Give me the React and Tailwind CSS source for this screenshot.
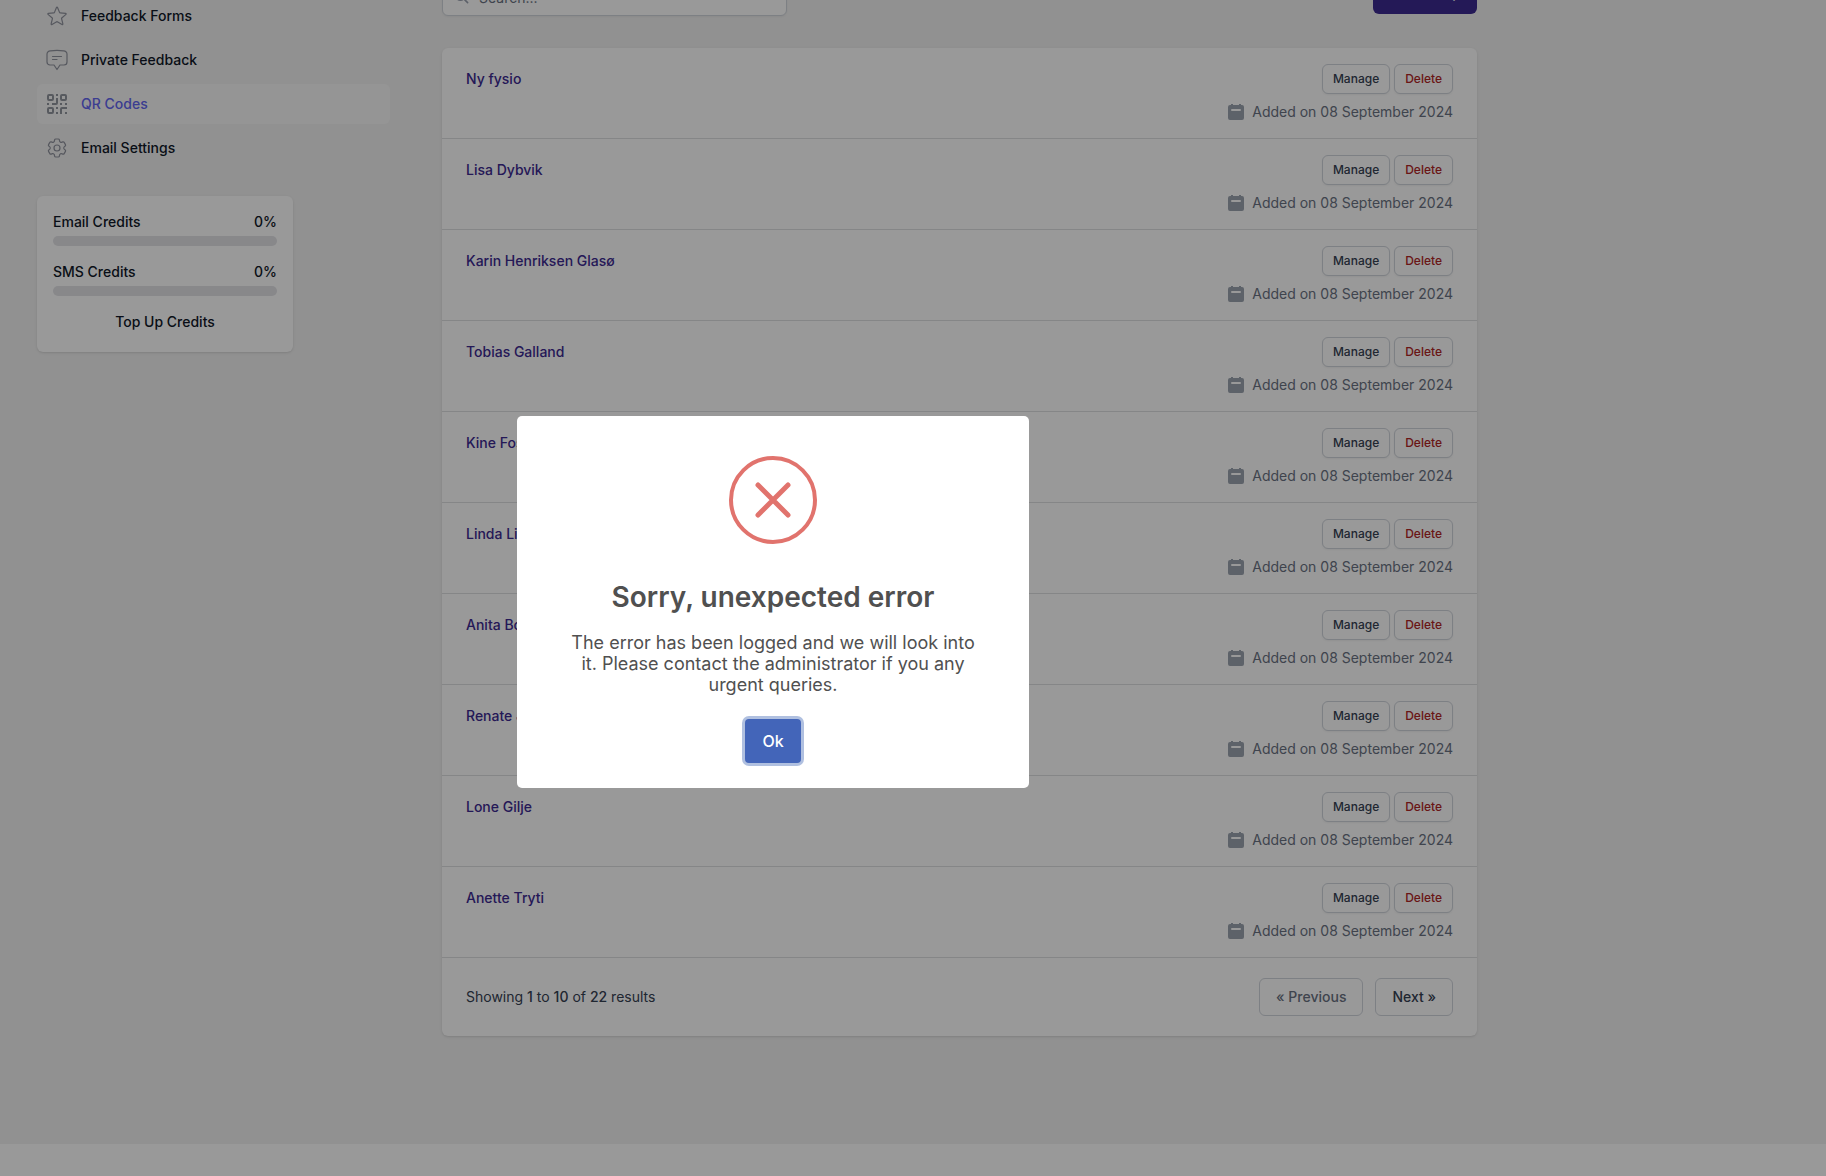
import React from 'react';

const navLinks = [
  { label: 'Feedback Forms', icon: 'star', href: '#feedback-forms' },
  { label: 'Private Feedback', icon: 'chat', href: '#private-feedback' },
  { label: 'QR Codes', icon: 'qr', href: '#qr-codes', active: true },
  { label: 'Email Settings', icon: 'cog', href: '#email-settings' },
];

const credits = [
  { label: 'Email Credits', value: 0 },
  { label: 'SMS Credits', value: 0 },
];

const people = [
  'Ny fysio',
  'Lisa Dybvik',
  'Karin Henriksen Glasø',
  'Tobias Galland',
  'Kine Fosse',
  'Linda Lie',
  'Anita Bolstad',
  'Renate Johansen',
  'Lone Gilje',
  'Anette Tryti',
];

const NavIcon = ({ name }) => {
  if (name === 'qr') {
    return (
      <svg className="size-6 shrink-0 text-[#92969f]" viewBox="0 0 24 24" fill="currentColor" aria-hidden="true">
        <g fill="none" stroke="currentColor" strokeWidth="2">
          <rect x="3" y="3" width="5" height="5" rx="1" />
          <rect x="16" y="3" width="5" height="5" rx="1" />
          <rect x="3" y="16" width="5" height="5" rx="1" />
          <path d="M12 6v5a1 1 0 0 1-1 1H7M16 22v-5a1 1 0 0 1 1-1h5" />
        </g>
        <path d="M11 2h2v2h-2zM2 11h2v2H2zM15 11h2v2h-2zM20 11h2v2h-2zM11 15h2v2h-2zM11 20h2v2h-2zM20 20h2v2h-2z" />
      </svg>
    );
  }
  return (
    <svg
      className="size-6 shrink-0 text-[#90939e]"
      viewBox="0 0 24 24"
      fill="none"
      stroke="currentColor"
      strokeWidth="1.2"
      strokeLinecap="round"
      strokeLinejoin="round"
      aria-hidden="true"
    >
      {name === 'star' && (
        <path d="M11.48 3.5a.56.56 0 0 1 1.04 0l2.12 5.11a.56.56 0 0 0 .48.35l5.52.44c.5.04.7.66.32.99l-4.2 3.6a.56.56 0 0 0-.19.56l1.29 5.38a.56.56 0 0 1-.84.61l-4.73-2.88a.56.56 0 0 0-.58 0l-4.73 2.88a.56.56 0 0 1-.84-.61l1.29-5.38a.56.56 0 0 0-.19-.56l-4.2-3.6a.56.56 0 0 1 .32-.99l5.52-.44a.56.56 0 0 0 .48-.35z" />
      )}
      {name === 'chat' && (
        <path d="M5.5 2.9Q12 2 18.5 2.9A3.2 3.2 0 0 1 22 6v8a3 3 0 0 1-3 3h-4l-3 4.5L9 17H5a3 3 0 0 1-3-3V6a3.2 3.2 0 0 1 3.500-3.100zM7.500 8.500h9M7.500 11.500h4.500" />
      )}
      {name === 'cog' && (
        <>
          <path d="M9.59 3.94c.09-.54.56-.94 1.11-.94h2.6c.55 0 1.02.4 1.11.94l.21 1.28c.07.38.32.69.65.87l.22.13c.32.2.72.26 1.07.12l1.22-.45a1.13 1.13 0 0 1 1.37.49l1.3 2.25a1.13 1.13 0 0 1-.26 1.43l-1 .83c-.3.24-.44.61-.43.99v.26c-.01.37.13.75.43.99l1 .83c.43.35.54.95.26 1.43l-1.3 2.24a1.13 1.13 0 0 1-1.37.49l-1.22-.45c-.35-.14-.75-.07-1.07.12l-.22.13c-.33.18-.58.5-.65.87l-.21 1.28c-.09.54-.56.94-1.11.94h-2.6c-.55 0-1.02-.4-1.11-.94l-.21-1.28a1.2 1.2 0 0 0-.65-.87l-.22-.13a1.2 1.2 0 0 0-1.07-.12l-1.22.45a1.13 1.13 0 0 1-1.37-.49l-1.3-2.24a1.13 1.13 0 0 1 .26-1.43l1-.83c.3-.24.44-.61.43-.99v-.26a1.2 1.2 0 0 0-.43-.99l-1-.83a1.13 1.13 0 0 1-.26-1.43l1.3-2.25a1.13 1.13 0 0 1 1.37-.49l1.22.45c.35.14.75.08 1.07-.12l.22-.13c.33-.18.58-.49.65-.87z" />
          <circle cx="12" cy="12" r="3" />
        </>
      )}
    </svg>
  );
};

const CalendarIcon = () => (
  <svg className="size-5 shrink-0 text-[#9ca3af]" viewBox="0 0 20 20" fill="currentColor" aria-hidden="true">
    <path
      fillRule="evenodd"
      d="M5 2h2v1h6V2h2v1h1a2 2 0 0 1 2 2v11a2 2 0 0 1-2 2H4a2 2 0 0 1-2-2V5a2 2 0 0 1 2-2h1zM6 7a1 1 0 0 0 0 2h8a1 1 0 0 0 0-2z"
    />
  </svg>
);

const Sidebar = () => (
  <aside className="w-[353px] shrink-0">
    <nav className="-mt-1 flex flex-col gap-1">
      {navLinks.map((link) => (
        <a
          key={link.label}
          href={link.href}
          className={`flex items-center gap-3 rounded-md px-2 py-2 text-sm leading-6 font-medium ${
            link.active ? 'bg-[#f9f9f9] text-[#6366f1]' : 'text-gray-900'
          }`}
        >
          <NavIcon name={link.icon} />
          <span>{link.label}</span>
        </a>
      ))}
    </nav>

    <div className="mt-7 w-64 rounded-md bg-white px-4 pt-4 pb-5 text-sm font-medium text-gray-900 shadow-sm">
      {credits.map((credit) => (
        <div key={credit.label} className="mb-4">
          <div className="mb-1 flex justify-between">
            <span>{credit.label}</span>
            <span>{credit.value}%</span>
          </div>
          <div className="h-2.5 rounded-full bg-[#e3e3e7]">
            <div className="h-2.5 rounded-full bg-[#3d2a91]" style={{ width: `${credit.value}%` }}></div>
          </div>
        </div>
      ))}
      <a href="#top-up" className="block text-center">
        Top Up Credits
      </a>
    </div>
  </aside>
);

const PersonRow = ({ name }) => (
  <li className="border-b border-[#dedfe1] px-6 py-4">
    <div className="flex items-center justify-between">
      <a href="#person" className="text-sm font-medium text-[#3d2a91]">
        {name}
      </a>
      <div className="flex gap-1">
        <button className="rounded-md border border-gray-300 bg-white px-2.5 py-1.5 text-xs font-medium text-gray-700 shadow-xs">
          Manage
        </button>
        <button className="rounded-md border border-gray-300 bg-white px-2.5 py-1.5 text-xs font-medium text-[#b02525] shadow-xs">
          Delete
        </button>
      </div>
    </div>
    <div className="mt-2 flex items-center justify-end gap-1.5 text-sm text-gray-500">
      <CalendarIcon />
      <p>Added on 08 September 2024</p>
    </div>
  </li>
);

const Pagination = () => (
  <div className="flex items-center justify-between px-6 py-5 text-sm">
    <p className="text-gray-700">
      Showing <span className="font-medium">1</span> to <span className="font-medium">10</span> of{' '}
      <span className="font-medium">22</span> results
    </p>
    <div className="flex gap-3 font-medium">
      <button className="rounded-md border border-gray-300 px-4 py-2 text-gray-500">« Previous</button>
      <button className="rounded-md border border-gray-300 px-4 py-2 text-gray-700">Next »</button>
    </div>
  </div>
);

const ErrorDialog = () => (
  <div className="fixed inset-0 flex items-center justify-center bg-black/40 pt-7 pr-[280px]">
    <div
      role="alertdialog"
      aria-modal="true"
      aria-labelledby="error-title"
      className="flex w-lg flex-col items-center rounded-[5px] bg-white px-12 pt-10 pb-[25px] text-center text-[#505050]"
    >
      <svg className="size-[88px]" viewBox="0 0 88 88" fill="none" stroke="#e1736d" aria-hidden="true">
        <circle cx="44" cy="44" r="42" strokeWidth="4" />
        <path d="M29 29l30 30M59 29L29 59" strokeWidth="5" strokeLinecap="round" />
      </svg>
      <h2 id="error-title" className="mt-[35px] text-[28px] leading-9 font-semibold">
        Sorry, unexpected error
      </h2>
      <p className="mt-[17px] text-lg leading-[21px]">
        The error has been logged and we will look into it. Please contact the administrator if you any urgent queries.
      </p>
      <button className="mt-6 h-11 rounded-sm bg-[#4365b9] px-[17px] text-base font-medium text-white ring-3 ring-[#b0c0e0]">
        Ok
      </button>
    </div>
  </div>
);

const App = () => (
  <div className="flex min-h-screen flex-col bg-white font-['Inter',sans-serif]">
    <div className="flex items-start gap-[52px] overflow-hidden bg-[#f2f2f2] pb-[108px] pl-[37px]">
      <Sidebar />
      <main className="max-w-[1035px] flex-1">
        <div className="-mt-7 flex items-start justify-between">
          <div className="relative mt-1.5 w-1/3">
            <svg
              className="absolute top-[11px] left-3 size-4 text-gray-400"
              viewBox="0 0 20 20"
              fill="none"
              stroke="currentColor"
              strokeWidth="2"
              strokeLinecap="round"
              aria-hidden="true"
            >
              <circle cx="8" cy="8" r="6" />
              <path d="M12.5 12.500l4.500 4.500" />
            </svg>
            <input
              type="search"
              aria-label="Search"
              placeholder="Search..."
              className="block h-[38px] w-full rounded-md border border-gray-300 bg-white pr-3 pl-9 text-sm shadow-xs placeholder:text-gray-500"
            />
          </div>
          <button className="rounded-md bg-[#3d2a91] px-4 py-[11px] text-sm leading-5 font-medium text-white">
            Add Group
          </button>
        </div>

        <div className="mt-8 rounded-md bg-white shadow-sm">
          <ul>
            {people.map((name) => (
              <PersonRow key={name} name={name} />
            ))}
          </ul>
          <Pagination />
        </div>
      </main>
    </div>
    <ErrorDialog />
  </div>
);

export default App;
